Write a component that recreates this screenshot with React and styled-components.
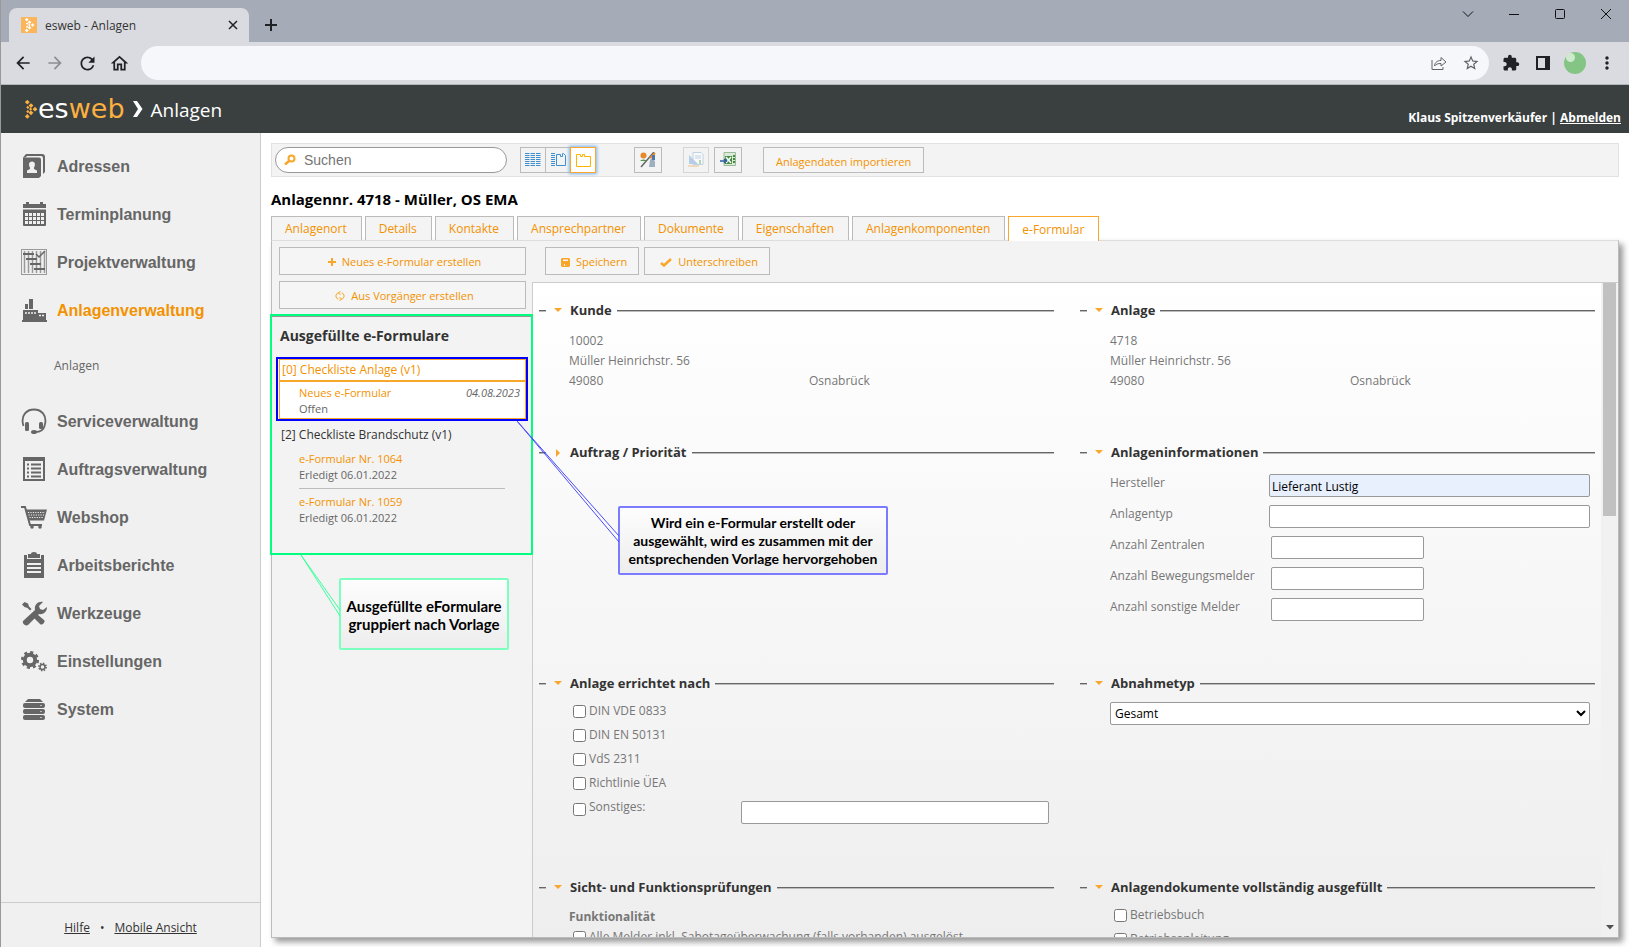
import { createGlobalStyle, styled } from "styled-components";
import {
  MdArrowBack,
  MdArrowForward,
  MdExtension,
  MdMoreVert,
  MdOutlineHome,
  MdRefresh,
  MdStarBorder,
} from "react-icons/md";

const orange = "#f39200";

const menuTop = [
  { title: "Adressen", icon: <AddressIcon /> },
  { title: "Terminplanung", icon: <CalendarIcon /> },
  { title: "Projektverwaltung", icon: <ProjectIcon /> },
  { title: "Anlagenverwaltung", icon: <FactoryIcon />, active: true },
];

const menuBottom = [
  { title: "Serviceverwaltung", icon: <HeadsetIcon /> },
  { title: "Auftragsverwaltung", icon: <ListIcon /> },
  { title: "Webshop", icon: <CartIcon /> },
  { title: "Arbeitsberichte", icon: <ClipboardIcon /> },
  { title: "Werkzeuge", icon: <ToolsIcon /> },
  { title: "Einstellungen", icon: <GearsIcon /> },
  { title: "System", icon: <ServerIcon /> },
];

const tabs = [
  "Anlagenort",
  "Details",
  "Kontakte",
  "Ansprechpartner",
  "Dokumente",
  "Eigenschaften",
  "Anlagenkomponenten",
  "e-Formular",
];

const norms = ["DIN VDE 0833", "DIN EN 50131", "VdS 2311", "Richtlinie ÜEA"];

export default function App() {
  return (
    <>
      <GlobalStyle />
      <Window>
        <BrowserChrome />
        <AppHeader />
        <Columns>
          <Sidebar />
          <Main>
            <Toolbar />
            <PageTitle>Anlagennr. 4718 - Müller, OS EMA</PageTitle>
            <Tabs>
              {tabs.map(tab => (
                <Tab key={tab} type="button" $active={tab === "e-Formular"}>
                  {tab}
                </Tab>
              ))}
            </Tabs>
            <Panel>
              <FormularList />
              <FormularArea />
            </Panel>
          </Main>
        </Columns>
      </Window>
    </>
  );
}

/* Browser */

function BrowserChrome() {
  return (
    <>
      <TabStrip>
        <BrowserTab>
          <svg width="16" height="16" viewBox="0 0 16 16">
            <rect width="16" height="16" fill="#fbb55a" />
            <LogoDots fill="#fff" x={4} y={1} scale={0.76} />
          </svg>
          <BrowserTabTitle>esweb - Anlagen</BrowserTabTitle>
          <ChromeButton type="button" aria-label="Tab schließen" $size={16}>
            <svg width="10" height="10" viewBox="0 0 10 10">
              <path d="M1 1l8 8M9 1l-8 8" stroke="#202124" strokeWidth="1.5" />
            </svg>
          </ChromeButton>
        </BrowserTab>
        <NewTabButton type="button" aria-label="Neuer Tab" $size={44}>
          <svg width="12" height="12" viewBox="0 0 12 12">
            <path d="M6 0v12M0 6h12" stroke="#202124" strokeWidth="2" />
          </svg>
        </NewTabButton>
        <WindowButtons>
          <ChromeButton type="button" aria-label="Tabs suchen" $size={46}>
            <svg width="12" height="12" viewBox="0 0 12 12">
              <path d="M1 3.500l5 5 5-5" fill="none" stroke="#111" />
            </svg>
          </ChromeButton>
          <ChromeButton type="button" aria-label="Minimieren" $size={46}>
            <svg width="10" height="10" viewBox="0 0 10 10">
              <path d="M0 5.500h10" stroke="#111" />
            </svg>
          </ChromeButton>
          <ChromeButton type="button" aria-label="Maximieren" $size={46}>
            <svg width="10" height="10" viewBox="0 0 10 10">
              <rect x=".5" y=".5" width="9" height="9" rx="1" fill="none" stroke="#111" />
            </svg>
          </ChromeButton>
          <ChromeButton type="button" aria-label="Schließen" $size={46}>
            <svg width="10" height="10" viewBox="0 0 10 10">
              <path d="M0 0l10 10M10 0L0 10" stroke="#111" />
            </svg>
          </ChromeButton>
        </WindowButtons>
      </TabStrip>
      <AddressBar>
        <ChromeButton type="button" aria-label="Zurück" $size={32}>
          <MdArrowBack size={20} />
        </ChromeButton>
        <ChromeButton type="button" aria-label="Vor" $size={32} $muted>
          <MdArrowForward size={20} />
        </ChromeButton>
        <ChromeButton type="button" aria-label="Neu laden" $size={32}>
          <MdRefresh size={21} />
        </ChromeButton>
        <ChromeButton type="button" aria-label="Startseite" $size={32}>
          <MdOutlineHome size={21} />
        </ChromeButton>
        <Omnibox>
          <UrlInput type="text" aria-label="Adresse" />
          <ChromeButton type="button" aria-label="Teilen" $size={32} $soft>
            <svg width="16" height="14" viewBox="0 0 16 14" fill="none" stroke="currentColor">
              <path d="M1 4v9.500h11V11" />
              <path d="M3.500 10C4 6 6.500 4.500 10 4.500V1.500l5 4.500-5 4V7.500C7 7.500 5 8 3.500 10z" />
            </svg>
          </ChromeButton>
          <ChromeButton type="button" aria-label="Lesezeichen" $size={32} $soft>
            <MdStarBorder size={18} />
          </ChromeButton>
        </Omnibox>
        <ChromeButton type="button" aria-label="Erweiterungen" $size={32}>
          <MdExtension size={18} />
        </ChromeButton>
        <ChromeButton type="button" aria-label="Seitenleiste" $size={32}>
          <svg width="14" height="14" viewBox="0 0 14 14">
            <path d="M0 0h14v14H0zM2 2v10h7V2z" fill="currentColor" fillRule="evenodd" />
          </svg>
        </ChromeButton>
        <ChromeButton type="button" aria-label="Profil" $size={32}>
          <svg width="22" height="22" viewBox="0 0 22 22">
            <circle cx="11" cy="11" r="11" fill="#84c586" />
            <circle cx="6.500" cy="5.500" r="4.500" fill="#cfe9cf" />
          </svg>
        </ChromeButton>
        <ChromeButton type="button" aria-label="Menü" $size={32}>
          <MdMoreVert size={20} />
        </ChromeButton>
      </AddressBar>
    </>
  );
}

function LogoDots({ fill, x = 0, y = 0, scale = 1 }) {
  const dots = [
    [2.3, 2.2], [6, 5.6], [10, 9.2], [6, 12.8], [2.3, 16.4], [2.8, 7.4], [5.6, 9.2], [2.8, 11.6],
  ];
  return (
    <g fill={fill} transform={`translate(${x} ${y}) scale(${scale})`}>
      {dots.map(([cx, cy], i) => {
        const r = i < 5 ? 2.4 : 1.6;
        return <path key={i} d={`M${cx} ${cy - r}l${r} ${r}-${r} ${r}-${r}-${r}z`} />;
      })}
    </g>
  );
}

/* App header */

function AppHeader() {
  return (
    <Header>
      <Brand href="#">
        <svg width="13" height="19" viewBox="0 0 13 19">
          <LogoDots fill="#fbb040" />
        </svg>
        <BrandText>
          es<span>web</span>
        </BrandText>
      </Brand>
      <svg width="10" height="16" viewBox="0 0 10 16">
        <path d="M0 0h4l5.500 8L4 16H0l5-8z" fill="#fff" />
      </svg>
      <HeaderTitle>Anlagen</HeaderTitle>
      <User>
        Klaus Spitzenverkäufer | <a href="#">Abmelden</a>
      </User>
    </Header>
  );
}

/* Sidebar */

function Sidebar() {
  return (
    <SidebarBox>
      <Menu>
        {menuTop.map(item => (
          <MenuItem key={item.title} href="#" $active={item.active}>
            {item.icon}
            {item.title}
          </MenuItem>
        ))}
        <SubItem href="#">Anlagen</SubItem>
        {menuBottom.map(item => (
          <MenuItem key={item.title} href="#">
            {item.icon}
            {item.title}
          </MenuItem>
        ))}
      </Menu>
      <SidebarFooter>
        <a href="#">Hilfe</a>
        <span>•</span>
        <a href="#">Mobile Ansicht</a>
      </SidebarFooter>
    </SidebarBox>
  );
}

function MenuIcon({ children }) {
  return (
    <svg width="26" height="26" viewBox="0 0 26 26" fill="#666">
      {children}
    </svg>
  );
}

function AddressIcon() {
  return (
    <MenuIcon>
      <path d="M2 4.500L5 1h16a3 3 0 0 1 3 3v15l-2 2V5a2 2 0 0 0-2-2H6L4.500 4.500z" />
      <path
        fillRule="evenodd"
        d="M2 4.500h16a2 2 0 0 1 2 2V23l-2 2H2zM6 20h10v-2.500l-3-1.500v-1.500c1.500-2 1.500-6-2-6s-3.500 4-2 6V16l-3 1.500z"
      />
    </MenuIcon>
  );
}

function CalendarIcon() {
  const cells = [];
  for (let row = 0; row < 3; row++) {
    for (let col = 0; col < 5; col++) {
      cells.push(<rect key={`${row}${col}`} x={4 + col * 4} y={12 + row * 4} width="3" height="3" fill="#f0f0f0" />);
    }
  }
  return (
    <MenuIcon>
      <path d="M5 1h3v2h11V1h3v2h3v4H2V3h3z" />
      <path d="M2 8.500h23V24a1 1 0 0 1-1 1H3a1 1 0 0 1-1-1z" />
      {cells}
    </MenuIcon>
  );
}

function ProjectIcon() {
  return (
    <MenuIcon>
      <rect x=".5" y=".5" width="25" height="25" fill="#f0f0f0" stroke="#999" />
      <path d="M3.500 2v22M7.500 2v22M11.500 2v22M15.500 2v22M19.500 2v22M23.500 2v22" stroke="#999" strokeWidth="1.500" />
      <path d="M2 5h11M5 10h11M9 15h11M13 20h11" stroke="#666" strokeWidth="2" />
      <path d="M15 5l3 3 6-6" stroke="#666" strokeWidth="1.500" fill="none" />
    </MenuIcon>
  );
}

function FactoryIcon() {
  return (
    <MenuIcon>
      <path d="M4 7h3v5H4zM8 2h4v10H8z" />
      <path d="M2 13h15v3h8v7h1v2H1v-2h1z" />
      <path d="M4 16h12M18 18.500h6" stroke="#f0f0f0" strokeWidth="1.500" strokeDasharray="2 1" />
    </MenuIcon>
  );
}

function HeadsetIcon() {
  return (
    <MenuIcon>
      <path
        d="M2.500 18C-1 7 6 1.500 13 1.500S27 7 23.500 18c-1 4-4 6-9 6"
        fill="none"
        stroke="#666"
        strokeWidth="1.800"
      />
      <rect x="4" y="14" width="4" height="9" rx="1.500" />
      <rect x="18" y="14" width="4" height="7" rx="1.500" />
      <ellipse cx="13" cy="24" rx="3" ry="2" />
    </MenuIcon>
  );
}

function ListIcon() {
  return (
    <MenuIcon>
      <path fillRule="evenodd" d="M2 1h22v24H2zM4 5v18h18V5z" />
      <path d="M6 8.500h2M6 12.500h2M6 16.500h2M6 20.500h2M10 8.500h10M10 12.500h10M10 16.500h10M10 20.500h10" stroke="#666" strokeWidth="2" />
    </MenuIcon>
  );
}

function CartIcon() {
  return (
    <MenuIcon>
      <path d="M0 3h4l5 18h12" fill="none" stroke="#666" strokeWidth="2" />
      <path d="M4.500 5.500H26L23 16.500H8z" />
      <path d="M7 8.500h17M7.500 11h16M8.500 13.500h14" stroke="#f0f0f0" strokeDasharray="1.200 1.200" />
      <circle cx="11" cy="23" r="1.800" />
      <circle cx="19" cy="23" r="1.800" />
    </MenuIcon>
  );
}

function ClipboardIcon() {
  return (
    <MenuIcon>
      <path d="M3 3h3v4h14V3h3v23H3z" />
      <path d="M7 2h3a3 2 0 0 1 6 0h3v4H7z" />
      <path d="M6 12h14M6 16h14M6 20h14" stroke="#f0f0f0" strokeWidth="1.800" />
    </MenuIcon>
  );
}

function ToolsIcon() {
  return (
    <MenuIcon>
      <path d="M1 4.500L3.500 2l3.500 1.500 1 3L10.500 9 9 10.500 6.500 8l-3-1z" />
      <path d="M13 18l3.500-3.500L23 20c2 1.800-2 6-4 4z" />
      <path d="M2 21L14 10c-1-5 3-9 8-8l-4 4 1 3 3 1 4-3c0 5-4 8-8 7L7 25c-3 1.500-6-1.500-5-4z" />
    </MenuIcon>
  );
}

function GearsIcon() {
  return (
    <MenuIcon>
      <circle cx="9" cy="12" r="5.200" fill="none" stroke="#666" strokeWidth="4" />
      <circle cx="9" cy="12" r="7.800" fill="none" stroke="#666" strokeWidth="2.500" strokeDasharray="3.060 3.060" />
      <circle cx="21.500" cy="19" r="2.500" fill="none" stroke="#666" strokeWidth="1.500" />
      <circle cx="21.500" cy="19" r="3.700" fill="none" stroke="#666" strokeWidth="1.500" strokeDasharray="1.450 1.450" />
    </MenuIcon>
  );
}

function ServerIcon() {
  return (
    <MenuIcon>
      <path d="M7 3h12l3 3H4z" />
      <rect x="2" y="7" width="22" height="5" rx="2" />
      <rect x="2" y="13" width="22" height="5" rx="2" />
      <rect x="2" y="19" width="22" height="5" rx="2" />
      <path d="M19 9.500h2M19 15.500h2M19 21.500h2" stroke="#bbb" />
    </MenuIcon>
  );
}

/* Toolbar */

function Toolbar() {
  return (
    <ToolbarBox>
      <Search>
        <svg width="12" height="12" viewBox="0 0 12 12" fill="none" stroke="#f9a72b">
          <circle cx="7.500" cy="4.500" r="3" strokeWidth="2" />
          <path d="M5 7l-4 3.500" strokeWidth="2.500" />
        </svg>
        <SearchInput type="text" placeholder="Suchen" aria-label="Suchen" />
      </Search>
      <ButtonGroup>
        <IconButton type="button" aria-label="Liste">
          <svg width="16" height="14" viewBox="0 0 16 14" stroke="#3f8fd0" strokeDasharray="4.500 1">
            <path d="M0 .5h16M0 2.500h16M0 4.500h16M0 6.500h16M0 8.500h16M0 10.500h16M0 12.500h16" />
          </svg>
        </IconButton>
        <IconButton type="button" aria-label="Liste und Details">
          <svg width="15" height="14" viewBox="0 0 15 14" stroke="#3f8fd0" fill="none">
            <path d="M0 .5h4M0 2.500h4M0 4.500h4M0 6.500h4M0 8.500h4M0 10.500h4M0 12.500h4" />
            <path d="M5.500 1.500h4v2h2v-3h1l2 2v10h-9z" />
          </svg>
        </IconButton>
        <IconButton type="button" aria-label="Details" $active>
          <svg width="15" height="13" viewBox="0 0 15 13" stroke="#fbb400" fill="none">
            <path d="M.5.500h4v2h2v-2h2v2h6v10H.5z" />
          </svg>
        </IconButton>
      </ButtonGroup>
      <IconButton type="button" aria-label="Darstellung" $wide>
        <svg width="16" height="16" viewBox="0 0 16 16">
          <path d="M0 9a4 3 0 0 1 7 0z" fill="#4c9a4a" />
          <circle cx="3.500" cy="3.500" r="3" fill="#e88a2c" />
          <path d="M14 0L1 15" stroke="#666" strokeWidth="1.500" />
          <path d="M15 1l-5 5" stroke="#e88a2c" strokeWidth="2" />
          <path d="M10 8l3-3 2 5v5H9z" fill="#9dafc0" />
          <path d="M12 3h3v5h-3z" fill="#4a78a8" />
        </svg>
      </IconButton>
      <ButtonPair>
        <IconButton type="button" aria-label="Bericht" disabled>
          <svg width="16" height="16" viewBox="0 0 16 16">
            <path d="M5 .5h8l2 2v10H5z" fill="#fff" stroke="#8fb4d8" />
            <path d="M7 4h6M7 6h6" stroke="#8fb4d8" />
            <path d="M1 3v9h9z" fill="#7da7dc" />
            <path d="M11 8h2v4h-2z" fill="#6fbf73" />
            <path d="M0 13h11v2H0z" fill="#e9c388" />
          </svg>
        </IconButton>
        <IconButton type="button" aria-label="Excel-Export" $wide>
          <svg width="16" height="16" viewBox="0 0 16 16">
            <path d="M4 .5h11.500v13H4z" fill="#dcebd9" stroke="#9cba98" />
            <path d="M5 4h7v8H5z" fill="#3f8a3f" />
            <path d="M6 5l5 6M11 5l-5 6" stroke="#fff" strokeWidth="1.500" />
            <path d="M13 4h2M13 7h2M13 10h2" stroke="#3f8a3f" strokeWidth="2" />
            <path d="M0 9h6M4 7l2.500 2L4 11" stroke="#2d5f9e" strokeWidth="1.500" fill="none" />
          </svg>
        </IconButton>
      </ButtonPair>
      <ImportButton type="button">Anlagendaten importieren</ImportButton>
    </ToolbarBox>
  );
}

/* List of forms */

function FormularList() {
  return (
    <ListColumn>
      <ListActions>
        <ActionButton type="button">
          <svg width="8" height="8" viewBox="0 0 8 8">
            <path d="M4 0v8M0 4h8" stroke="#f9a72b" strokeWidth="2" />
          </svg>
          Neues e-Formular erstellen
        </ActionButton>
        <ActionButton type="button">
          <svg width="10" height="10" viewBox="0 0 10 10" fill="none" stroke="#f9a72b">
            <path d="M4.500 2H2.500L1 4v2l1.500 2h1M5.500 8h2L9 6V4L7.500 2h-1M5.500 0L3.500 2l2 2M4.500 6l2 2-2 2" />
          </svg>
          Aus Vorgänger erstellen
        </ActionButton>
      </ListActions>
      <FilledForms>
        <ListHeading>Ausgefüllte e-Formulare</ListHeading>
        <Selected>
          <GroupTitle $active>[0] Checkliste Anlage (v1)</GroupTitle>
          <Entry $active>
            <EntryLine>
              <EntryLink href="#">Neues e-Formular</EntryLink>
              <em>04.08.2023</em>
            </EntryLine>
            <div>Offen</div>
          </Entry>
          <SelectedFrame />
        </Selected>
        <GroupTitle>[2] Checkliste Brandschutz (v1)</GroupTitle>
        <Entry>
          <EntryLink href="#">e-Formular Nr. 1064</EntryLink>
          <div>Erledigt 06.01.2022</div>
        </Entry>
        <Divider />
        <Entry>
          <EntryLink href="#">e-Formular Nr. 1059</EntryLink>
          <div>Erledigt 06.01.2022</div>
        </Entry>
        <ListFrame />
        <GroupNote>
          <svg width="41" height="64" viewBox="0 0 41 64">
            <path d="M40 61L1 0l39 55" fill="none" stroke="#3dff9c" />
          </svg>
          Ausgefüllte eFormulare
          <br />
          gruppiert nach Vorlage
        </GroupNote>
        <SelectionNote>
          <svg width="103" height="124" viewBox="0 0 103 124">
            <path d="M102 121L0 0l102 115" fill="none" stroke="#4b4bff" />
          </svg>
          Wird ein e-Formular erstellt oder
          <br />
          ausgewählt, wird es zusammen mit der
          <br />
          entsprechenden Vorlage hervorgehoben
        </SelectionNote>
      </FilledForms>
    </ListColumn>
  );
}

/* Form */

function Section({ title, closed, children }) {
  return (
    <section>
      <SectionHead>
        <Rule $short />
        <svg width="8" height="8" viewBox="0 0 8 8" fill="#f9a72b">
          <path d={closed ? "M2 0l4 4-4 4z" : "M0 1h8L4 5z"} />
        </svg>
        <h3>{title}</h3>
        <Rule />
      </SectionHead>
      {children}
    </section>
  );
}

function Address({ number }) {
  return (
    <AddressGrid>
      <span>{number}</span>
      <span />
      <span>Müller Heinrichstr. 56</span>
      <span />
      <span>49080</span>
      <span>Osnabrück</span>
    </AddressGrid>
  );
}

function Field({ id, label, value, small }) {
  return (
    <FieldRow>
      <label htmlFor={id}>{label}</label>
      <TextInput id={id} type="text" defaultValue={value} $filled={Boolean(value)} $small={small} />
    </FieldRow>
  );
}

function Check({ label }) {
  return (
    <CheckLabel>
      <input type="checkbox" />
      <span>{label}</span>
    </CheckLabel>
  );
}

function FormularArea() {
  return (
    <FormColumn>
      <FormActions>
        <ActionButton type="button">
          <svg width="9" height="9" viewBox="0 0 9 9" fill="#f9a72b">
            <path fillRule="evenodd" d="M1 0h7l1 1v7l-1 1H1L0 8V1zM2 1.500v1.500h5v-1.500zM3 6v2h1V6z" />
          </svg>
          Speichern
        </ActionButton>
        <ActionButton type="button">
          <svg width="12" height="9" viewBox="0 0 12 9">
            <path d="M1 5l3 2.500L11 1" fill="none" stroke="#f9a72b" strokeWidth="2.500" />
          </svg>
          Unterschreiben
        </ActionButton>
      </FormActions>
      <FormScroll>
        <FormGrid>
          <Section title="Kunde">
            <Address number="10002" />
          </Section>
          <Section title="Anlage">
            <Address number="4718" />
          </Section>
          <Section title="Auftrag / Priorität" closed />
          <Section title="Anlageninformationen">
            <Fields>
              <Field id="hersteller" label="Hersteller" value="Lieferant Lustig" />
              <Field id="anlagentyp" label="Anlagentyp" />
              <Field id="zentralen" label="Anzahl Zentralen" small />
              <Field id="bewegungsmelder" label="Anzahl Bewegungsmelder" small />
              <Field id="melder" label="Anzahl sonstige Melder" small />
            </Fields>
          </Section>
          <Section title="Anlage errichtet nach">
            <Checks>
              {norms.map(norm => (
                <Check key={norm} label={norm} />
              ))}
              <OtherRow>
                <Check label="Sonstiges:" />
                <TextInput type="text" aria-label="Sonstiges" />
              </OtherRow>
            </Checks>
          </Section>
          <Section title="Abnahmetyp">
            <SelectBody>
              <Select aria-label="Abnahmetyp" defaultValue="Gesamt">
                <option>Gesamt</option>
              </Select>
            </SelectBody>
          </Section>
          <Section title="Sicht- und Funktionsprüfungen">
            <Checks>
              <ChecksTitle>Funktionalität</ChecksTitle>
              <Check label="Alle Melder inkl. Sabotageüberwachung (falls vorhanden) ausgelöst" />
            </Checks>
          </Section>
          <Section title="Anlagendokumente vollständig ausgefüllt">
            <Checks>
              <Check label="Betriebsbuch" />
              <Check label="Betriebsanleitung" />
            </Checks>
          </Section>
        </FormGrid>
        <ScrollTrack>
          <ScrollThumb />
          <svg width="8" height="5" viewBox="0 0 8 5">
            <path d="M0 0h8L4 4.500z" fill="#505050" />
          </svg>
        </ScrollTrack>
      </FormScroll>
    </FormColumn>
  );
}

const GlobalStyle = createGlobalStyle`
  * {
    box-sizing: border-box;
  }

  body {
    background: #fff;
    color: #777;
    font-family: "Open Sans", "Noto Sans", sans-serif;
    font-size: 12px;
    margin: 0;
  }

  button, input, select {
    font: inherit;
  }

  h1, h2, h3, h4 {
    margin: 0;
  }

  svg {
    flex: none;
  }
`;

const Window = styled.div`
  border-left: 1px solid #999;
  display: flex;
  flex-direction: column;
  height: 100vh;
  overflow: hidden;
`;

const TabStrip = styled.div`
  background: #a6abb8;
  display: flex;
  flex: none;
  height: 42px;
  padding-left: 8px;
`;

const BrowserTab = styled.div`
  align-items: center;
  background: #dadbe0;
  border-radius: 8px 8px 0 0;
  color: #333;
  display: flex;
  gap: 8px;
  margin-top: 8px;
  padding: 0 8px 0 12px;
  width: 240px;
`;

const BrowserTabTitle = styled.span`
  flex: 1;
`;

const ChromeButton = styled.button`
  align-items: center;
  background: none;
  border: 0;
  color: ${props => (props.$muted ? "#8c8e94" : props.$soft ? "#5f6368" : "#202124")};
  display: flex;
  flex: none;
  justify-content: center;
  padding: 0;
  width: ${props => props.$size}px;
`;

const NewTabButton = styled(ChromeButton)`
  padding-top: 8px;
`;

const WindowButtons = styled.div`
  display: flex;
  height: 28px;
  margin-left: auto;
`;

const AddressBar = styled.div`
  align-items: center;
  background: #dadbe0;
  border-bottom: 1px solid #b3b6b9;
  display: flex;
  flex: none;
  height: 43px;
  padding: 0 6px;
`;

const Omnibox = styled.div`
  background: #f6f7fa;
  border-radius: 17px;
  display: flex;
  flex: 1;
  height: 34px;
  margin: 0 6px;
  padding: 0 2px 0 16px;
`;

const UrlInput = styled.input`
  background: none;
  border: 0;
  flex: 1;
  outline: 0;
`;

const Header = styled.header`
  align-items: center;
  background: #3a3f3f;
  color: #fff;
  display: flex;
  flex: none;
  gap: 8px;
  height: 48px;
  padding: 0 8px 0 24px;
`;

const Brand = styled.a`
  align-items: center;
  color: #fff;
  display: flex;
  text-decoration: none;
`;

const BrandText = styled.span`
  font-family: "DejaVu Sans", sans-serif;
  font-size: 27px;
  line-height: 44px;

  & span {
    color: #fbb040;
  }
`;

const HeaderTitle = styled.h1`
  font-size: 19px;
  font-weight: 400;
  padding-top: 2px;
`;

const User = styled.div`
  color: #fff;
  font-weight: 700;
  margin: 16px 0 0 auto;

  & a {
    color: #fff;
  }
`;

const Columns = styled.div`
  display: flex;
  flex: 1;
  min-height: 0;
`;

const SidebarBox = styled.aside`
  background: #f0f0f0;
  border-right: 1px solid #ccc;
  display: flex;
  flex: none;
  flex-direction: column;
  width: 260px;
`;

const Menu = styled.nav`
  display: flex;
  flex: 1;
  flex-direction: column;
  padding-top: 9px;
`;

const MenuItem = styled.a`
  align-items: center;
  color: ${props => (props.$active ? orange : "#666")};
  display: flex;
  font-family: "Liberation Sans", Arial, sans-serif;
  font-size: 16px;
  font-weight: 700;
  gap: 10px;
  height: 48px;
  padding: 2px 0 0 20px;
  text-decoration: none;

  & svg {
    margin-bottom: 2px;
  }
`;

const SubItem = styled.a`
  color: #666;
  line-height: 63px;
  padding-left: 53px;
  text-decoration: none;
`;

const SidebarFooter = styled.footer`
  align-items: center;
  border-top: 1px solid #ccc;
  color: #333;
  display: flex;
  gap: 10px;
  height: 45px;
  justify-content: center;
  padding-top: 4px;

  & a {
    color: #333;
  }
`;

const Main = styled.main`
  display: flex;
  flex: 1;
  flex-direction: column;
  min-width: 0;
  padding: 10px 10px 9px;
`;

const ToolbarBox = styled.div`
  align-items: center;
  background: #f3f3f3;
  border: 1px solid #e2e2e2;
  display: flex;
  flex: none;
  height: 34px;
  padding-left: 3px;
`;

const Search = styled.div`
  align-items: center;
  background: #fff;
  border: 1px solid #999;
  border-radius: 13px;
  display: flex;
  gap: 8px;
  height: 26px;
  margin-right: 13px;
  padding: 0 8px;
  width: 232px;
`;

const SearchInput = styled.input`
  background: none;
  border: 0;
  flex: 1;
  font-family: "Liberation Sans", Arial, sans-serif;
  font-size: 14px;
  min-width: 0;
  outline: 0;
  padding: 0;
`;

const ButtonGroup = styled.div`
  display: flex;
  margin-right: 38px;

  & > * + * {
    margin-left: -1px;
  }
`;

const ButtonPair = styled.div`
  display: flex;
  gap: 5px;
  margin: 0 21px;
`;

const IconButton = styled.button`
  align-items: center;
  background: ${props => (props.$active ? "#fff" : "#f3f3f3")};
  border: 1px solid ${props => (props.$active ? "#f9a72b" : "#bbb")};
  box-shadow: ${props => (props.$active ? "0 0 3px 1px #7db4ea" : "none")};
  display: flex;
  height: 26px;
  justify-content: center;
  padding: 0;
  width: ${props => (props.$wide ? 28 : 26)}px;

  &:disabled {
    opacity: .5;
  }
`;

const ImportButton = styled.button`
  background: #f5f5f5;
  border: 1px solid #bbb;
  color: ${orange};
  font-size: 11px;
  height: 26px;
  padding: 3px 12px 0;
`;

const PageTitle = styled.h2`
  color: #000;
  font-size: 15px;
  line-height: 20px;
  margin: 12px 0 7px;
`;

const Tabs = styled.div`
  display: flex;
  flex: none;
  gap: 3px;
`;

const Tab = styled.button`
  background: ${props => (props.$active ? "#fff" : "#f4f4f4")};
  border: 1px solid ${props => (props.$active ? "#f9a72b" : "#bbb")};
  border-bottom: 0;
  color: ${orange};
  height: ${props => (props.$active ? 25 : 24)}px;
  margin-bottom: ${props => (props.$active ? "-1px" : "0")};
  padding: 0 14px 0 13px;
  position: relative;
  z-index: ${props => (props.$active ? 1 : 0)};
`;

const Panel = styled.div`
  background: #f3f3f3;
  border: 1px solid #bbb;
  border-top-color: #ddd;
  box-shadow: 4px 4px 6px #999;
  display: flex;
  flex: 1;
  min-height: 0;
`;

const ListColumn = styled.div`
  display: flex;
  flex: none;
  flex-direction: column;
  width: 260px;
`;

const ListActions = styled.div`
  display: flex;
  flex-direction: column;
  gap: 6px;
  padding: 6px 6px 7px 7px;
`;

const ActionButton = styled.button`
  align-items: center;
  background: #f5f5f5;
  border: 1px solid #bbb;
  color: ${orange};
  display: flex;
  font-size: 11px;
  gap: 6px;
  height: 28px;
  justify-content: center;
  padding: 0 11px 0 15px;

  & svg {
    margin-top: 2px;
  }
`;

const FilledForms = styled.div`
  border-top: 1px solid #999;
  height: 239px;
  position: relative;
`;

const ListHeading = styled.h3`
  color: #333;
  font-size: 14px;
  line-height: 20px;
  padding: 9px 8px 13px;
`;

const Selected = styled.div`
  background: #fff;
  border: 1px solid #f9a72b;
  margin: 0 6px 5px 7px;
  position: relative;
`;

const GroupTitle = styled.h4`
  border-bottom: ${props => (props.$active ? "2px solid #f9a72b" : "0")};
  color: ${props => (props.$active ? orange : "#333")};
  font-size: 12px;
  font-weight: 400;
  line-height: ${props => (props.$active ? 20 : 22)}px;
  padding-left: ${props => (props.$active ? 2 : 9)}px;
`;

const Entry = styled.div`
  color: #666;
  font-size: 11px;
  line-height: 16px;
  padding: ${props => (props.$active ? "3px 5px 1px 19px" : "5px 27px 4px")};
`;

const EntryLine = styled.div`
  display: flex;
  justify-content: space-between;
`;

const EntryLink = styled.a`
  color: ${orange};
  text-decoration: none;
`;

const Divider = styled.hr`
  border: 0;
  border-top: 1px solid #bbb;
  margin: 1px 27px 0;
`;

const SelectedFrame = styled.div`
  border: 2px solid #0000ff;
  inset: -3px -3px -3px -4px;
  position: absolute;
`;

const ListFrame = styled.div`
  border: 2px solid #00ff7f;
  inset: -3px -1px 0 -2px;
  position: absolute;
`;

const Note = styled.div`
  background: linear-gradient(#fdfdfd, #ededed);
  border-radius: 2px;
  color: #000;
  font-family: Lato, "Open Sans", sans-serif;
  font-size: 14px;
  font-weight: 700;
  line-height: 18px;
  position: absolute;
  text-align: center;
  white-space: nowrap;
  z-index: 2;

  & svg {
    position: absolute;
  }
`;

const GroupNote = styled(Note)`
  border: 2px solid #7dffbf;
  font-size: 15px;
  left: 67px;
  padding: 17px 0 15px;
  top: 261px;
  width: 170px;

  & svg {
    left: -41px;
    top: -25px;
  }
`;

const SelectionNote = styled(Note)`
  border: 2px solid #7b7bff;
  left: 346px;
  padding: 6px 0 5px;
  top: 189px;
  width: 270px;

  & svg {
    left: -103px;
    top: -87px;
  }
`;

const FormColumn = styled.div`
  display: flex;
  flex: 1;
  flex-direction: column;
  min-width: 0;
`;

const FormActions = styled.div`
  display: flex;
  flex: none;
  gap: 5px;
  padding: 6px 13px 7px;
`;

const FormScroll = styled.div`
  background: linear-gradient(#fff, #eee);
  border-left: 1px solid #ccc;
  border-top: 1px solid #ccc;
  display: flex;
  flex: 1;
  min-height: 0;
  overflow: hidden;
`;

const FormGrid = styled.form`
  align-content: start;
  display: grid;
  flex: 1;
  gap: 47px 26px;
  grid-template-columns: 1fr 1fr;
  padding: 18px 6px 0;
`;

const ScrollTrack = styled.div`
  align-items: center;
  background: #f1f1f1;
  display: flex;
  flex: none;
  flex-direction: column;
  justify-content: space-between;
  padding-bottom: 7px;
  width: 17px;
`;

const ScrollThumb = styled.div`
  background: #c1c1c1;
  height: 36%;
  width: 13px;
`;

const SectionHead = styled.div`
  align-items: center;
  color: #333;
  display: flex;
  gap: 8px;
  height: 20px;

  & h3 {
    font-size: 13px;
    line-height: 20px;
    margin: -2px -3px 0 0;
  }
`;

const Rule = styled.span`
  background: linear-gradient(#666 50%, #bbb 50%);
  flex: ${props => (props.$short ? "0 0 7px" : "1")};
  height: 2px;
`;

const SectionBody = styled.div`
  padding-left: 30px;
  padding-right: 5px;
`;

const AddressGrid = styled(SectionBody)`
  display: grid;
  grid-template-columns: 1fr 1fr;
  line-height: 20px;
  padding-bottom: 5px;
  padding-top: 10px;
`;

const Fields = styled(SectionBody)`
  padding-top: 9px;
`;

const FieldRow = styled.div`
  display: grid;
  grid-template-columns: 159px 1fr;
  height: 31px;
  line-height: 22px;
  padding-top: 2px;

  & label {
    margin-top: -2px;
  }
`;

const TextInput = styled.input`
  background: ${props => (props.$filled ? "#e8f0fe" : "#fff")};
  border: 1px solid #999;
  border-radius: 2px;
  color: #000;
  height: 23px;
  margin-left: ${props => (props.$small ? 2 : 0)}px;
  min-width: 0;
  padding: 1px 2px 0;
  width: ${props => (props.$small ? "153px" : "auto")};
`;

const Checks = styled(SectionBody)`
  padding-bottom: 6px;
  padding-top: 5px;
`;

const CheckLabel = styled.label`
  align-items: center;
  display: flex;
  gap: 3px;
  line-height: 24px;
  padding-left: 4px;
  white-space: nowrap;

  & input {
    height: 13px;
    margin: 0;
    width: 13px;
  }
`;

const OtherRow = styled.div`
  display: grid;
  grid-template-columns: 172px 1fr;
  padding-bottom: 1px;

  & input[type="text"] {
    margin-top: 6px;
  }

  & span {
    align-self: flex-start;
  }
`;

const ChecksTitle = styled.h4`
  font-size: 12px;
  line-height: 16px;
  padding-top: 6px;
`;

const SelectBody = styled(SectionBody)`
  padding-top: 8px;
`;

const Select = styled.select`
  background: #fff;
  border: 1px solid #999;
  border-radius: 2px;
  color: #000;
  height: 23px;
  width: 100%;
`;
